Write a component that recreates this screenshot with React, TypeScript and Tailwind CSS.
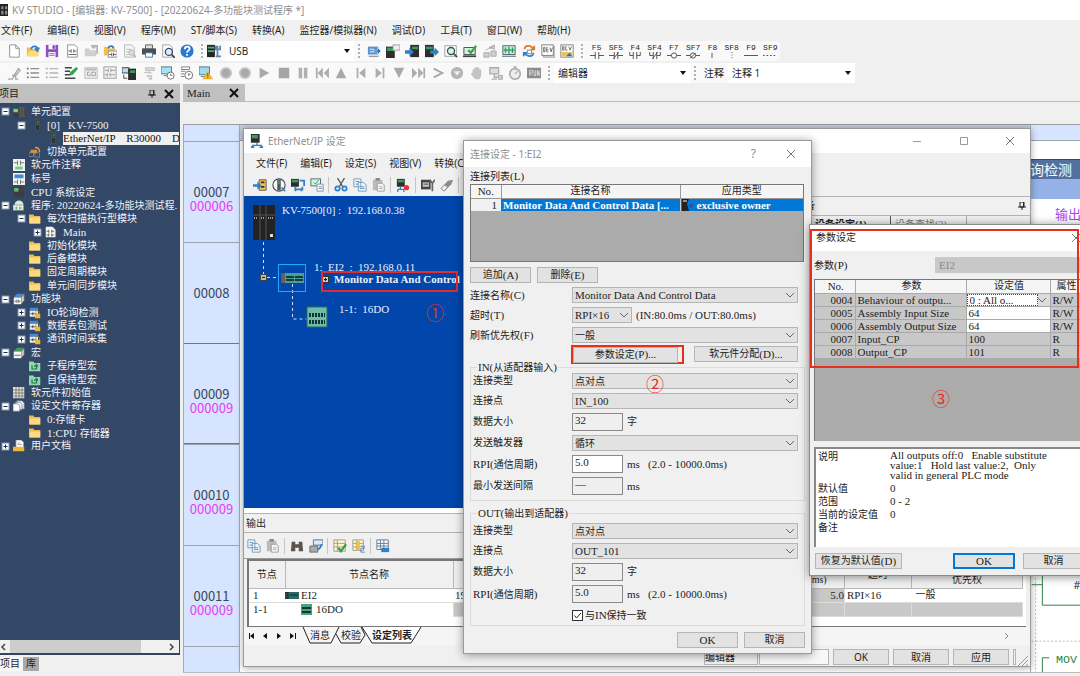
import React from "react";

const C = {
  k: "#3a3a3a",
  g: "#b4b4b4",
  b: "#2f80c8",
  gr: "#3c9a5f",
  y: "#f2c04e",
  p: "#8a4fc0",
};

const icons: Record<string, React.ReactNode> = {
  app: (<><rect width="16" height="16" fill="#222" /><path d="M2 3h3v4H2zM7 3h3v4H7zM12 3h3v4h-3zM2 9h3v5H2zM7 9h3v5H7zM12 9h3v5h-3z" fill="#8b8b8b" /></>),
  new: <path d="M3 1h7l4 4v10H3zM10 1v4h4" fill="#fff" stroke="#8c8c8c" />,
  open: (<><path d="M1 14V4h5l1 2h7v8z" fill={C.y} /><path d="M1 14l3-6h12l-3 6z" fill="#ffda7a" /><path d="M6 6c1-5 7-4 7 0M10 5l3 3 2-4" fill="none" stroke={C.b} strokeWidth="2" /></>),
  save: (<><path d="M1 1h14v14H1z" fill={C.p} /><path d="M4 1h8v5H4zM4 9h8v6H4z" fill="#fff" /><path d="M9 2h2v3H9zM5 11h6M5 13h6" fill={C.p} stroke={C.p} /></>),
  pageRung: (<><path d="M3 1h8l3 3v11H3z" fill="#fff" stroke="#888" /><path d="M4 8h3M10 8h3M7 6v4M10 6v4M4 12h9" stroke="#555" /></>),
  folderOff: (<><path d="M1 14V5h5l1 2h7v7z" fill="#cfcfcf" /><path d="M8 2h7v9M9 4h4" fill="none" stroke={C.g} strokeWidth="2" /></>),
  folderRung: (<><path d="M1 13V3h5l1 2h7v8z" fill={C.y} /><path d="M6 5c1-4 6-3 6 0" stroke={C.b} strokeWidth="2" fill="none" /><rect x="6" y="8" width="10" height="7" fill="#fff" stroke="#888" /><path d="M7 12h3M12 12h3M10 10v4M12 10v4" stroke="#555" /></>),
  pageOff: (<><path d="M3 1h8l3 3v11H3z" fill="#f5f5f5" stroke={C.g} /><path d="M5 6h6M5 9h4M5 12h3" stroke={C.g} /><circle cx="11" cy="10" r="3" fill="#ddd" stroke={C.g} /><path d="M13 12l3 3" stroke={C.g} strokeWidth="2" /></>),
  print: (<><path d="M4 1h8v5H4z" fill="#ddd" stroke="#555" /><rect y="5" width="16" height="7" fill="#4a4f57" /><path d="M4 10h8v5H4z" fill="#fff" stroke="#3b6ea5" /></>),
  preview: (<><path d="M2 1h8l3 3v11H2z" fill="#fff" stroke="#999" /><circle cx="9" cy="9" r="4" fill="#d8efff" stroke="#446" strokeWidth="1.5" /><path d="M12 12l4 4" stroke="#345" strokeWidth="2" /></>),
  help: (<><circle cx="8" cy="8" r="7.5" fill="#2a78d0" /><path d="M5.5 6c0-4 5.500-3.500 5.500-.5C11 7.500 8 7.500 8 10M8 11.500v2" stroke="#fff" strokeWidth="2" fill="none" /></>),
  plcTool: (<><rect y="1" width="9" height="14" fill="#262626" /><path d="M1 4h7M1 8h7" stroke="#4bb070" strokeWidth="2" /><path d="M12 2v12M10 2v4h5V2M10 14h6" stroke="#5f87ad" strokeWidth="2" fill="none" /></>),
  send: (<><path d="M1 3h12v9H1z" fill="#5a90c8" /><path d="M2 14h11" stroke="#666" /><path d="M3 6h5M3 9h5" stroke="#fff" /><path d="M8 7h4V4l4 4-4 4V9H8z" fill="#2272c8" stroke="#fff" strokeWidth=".5" /></>),
  plcTalk: (<><rect y="3" width="10" height="13" fill="#2d2d2d" /><rect x="1" y="4" width="8" height="4" fill={C.gr} /><path d="M8 1h8v6h-4l-2 2V7H8z" fill="#eee" stroke="#999" /></>),
  plcIn: (<><rect x="6" y="1" width="10" height="14" fill="#2d2d2d" /><rect x="8" y="3" width="7" height="3" fill={C.gr} /><path d="M0 7h5V4l5 5-5 5v-3H0z" fill={C.b} /></>),
  plcOut: (<><rect y="1" width="10" height="14" fill="#2d2d2d" /><rect x="1" y="3" width="8" height="3" fill={C.gr} /><path d="M6 7h5V4l5 5-5 5v-3H6z" fill={C.b} /></>),
  find: (<><rect x="1" y="2" width="13" height="12" fill="#fff" stroke="#999" /><circle cx="8" cy="8" r="4" fill="#d9f3e7" stroke="#355" strokeWidth="1.500" /><path d="M11 11l4 4" stroke="#355" strokeWidth="2" /></>),
  monCheck: (<><path d="M1 4h13v8H1z" fill="#d5f0df" stroke="#444" /><path d="M0 14h15" stroke="#444" strokeWidth="2" /><path d="M6 7l3 3 6-8" stroke="#39a83e" strokeWidth="2.500" fill="none" /></>),
  cutOff: <path d="M1 10h6v5H1zM7 4l6-3v5zM9 8h6v6H9zM3 7l9-4" fill="#cfcfcf" stroke="#a8a8a8" />,
  monGrid: (<><rect x="1" y="2" width="14" height="10" fill="#c9f0d8" stroke="#456" /><path d="M4 4v6M8 3v8M12 4v6M2 7h12" stroke="#2c9a58" strokeWidth="1.500" /><path d="M0 14h16" stroke="#456" /></>),
  loop: (<><path d="M3 6c0-5 8-5 10 0M10 6h4V2" stroke="#e07b21" strokeWidth="2" fill="none" /><path d="M13 10c0 5-8 5-10 0M6 10H2v4" stroke="#2f80c8" strokeWidth="2" fill="none" /><path d="M6 7h5v4H6z" fill="#fff" stroke="#777" /></>),
  dev: (<><rect x="3" y="3" width="13" height="12" fill="#ddd" stroke="#999" /><rect x="1" y="1" width="13" height="12" fill="#fff" stroke="#777" /><path d="M3 4v5h1.500V4zM7.500 4H6.500v5h2M6.500 6.500h2M10 4l1.500 5L13 4" fill="none" stroke="#555" strokeWidth=".9" /></>),
  devPic: (<><rect x="1" y="1" width="14" height="14" fill="#fff" stroke="#777" /><path d="M3 3v4h1.500V3zM7.500 3H6.500v4h2M10 3l1.500 4L13 3" fill="none" stroke="#555" strokeWidth=".9" /><path d="M2 9h12v5H2z" fill={C.y} /><path d="M7 14l4-4 3 4z" fill="#2376b9" /></>),
  pen: <path d="M1 15h5l2-4 5-8 2 2-6 7M9 12l-3-2M10 12v3h3" stroke="#a6a6a6" fill="none" strokeWidth="1.500" />,
  list: (<><path d="M5 3h10M5 8h10M5 13h10" stroke="#8e8e8e" strokeWidth="1.500" /><path d="M1 2h2v2H1zM1 7h2v2H1zM1 12h2v2H1z" fill="#777" /></>),
  listOff: (<><path d="M5 3h10M5 8h10M5 13h10" stroke="#b5b5b5" strokeWidth="1.500" /><path d="M1 2h2v2H1zM1 7h2v2H1zM1 12h2v2H1z" fill="#aaa" /></>),
  listPen: (<><path d="M1 2h8M1 6h6M1 10h6M1 14h12" stroke="#444" strokeWidth="1.500" /><path d="M6 11l1-4 7-6 2 2-6 7z" fill="#35a34a" /></>),
  winGo: (<><rect x="1" y="2" width="14" height="12" fill="#efefef" stroke={C.g} /><path d="M2 4h12" stroke={C.g} strokeWidth="2" /><path d="M7 7H4v4h3V9M9 7h4v4H9z" fill="none" stroke="#999" /></>),
  winRung: (<><rect x="1" y="1" width="14" height="13" fill="#efefef" stroke="#999" /><path d="M2 5h4M9 5h5M6 3v4M9 3v4M2 10h3M8 10h6M5 8v4M8 8v4" stroke="#999" /></>),
  plcMon: (<><rect x="0" y="2" width="8" height="6" fill="#bde" stroke="#333" /><rect x="7" y="3" width="9" height="13" fill="#2d2d2d" /><rect x="9" y="5" width="6" height="3" fill={C.gr} /><path d="M2 10v4h4" stroke="#333" fill="none" /></>),
  handOff: <path d="M4 2h10v3H4zM8 5v4M2 8c3-2 5 0 10 0M5 11h6v4H8" fill="#ddd" stroke="#b8b8b8" />,
  monClock: (<><rect x="0" y="1" width="12" height="8" fill="#a8e0f5" stroke="#4a7080" /><path d="M3 11h5" stroke="#4a7080" /><circle cx="11" cy="11" r="4" fill="#fff" stroke="#666" /><path d="M11 9v2h2" stroke="#666" fill="none" /></>),
  listClock: (<><path d="M2 1h9v3H2zM1 6h5M1 9h4M1 12h4" stroke="#777" fill="#fff" /><circle cx="10" cy="10.500" r="4.500" fill="#fff" stroke="#666" /><path d="M10 8v3l2-2" stroke="#666" fill="none" /></>),
  monWarn: (<><rect x="0" y="1" width="12" height="9" fill="#9bdcf5" stroke="#4a7080" /><path d="M2 12h5" stroke="#4a7080" /><path d="M10 5l6 10H4z" fill="#f4b32c" /><path d="M10 8v4M10 13v1" stroke="#553" /></>),
  rec: (<><circle cx="8" cy="8" r="7" fill="#c9c9c9" /><circle cx="8" cy="8" r="5" fill="#a9a9a9" /></>),
  play: <path d="M3 2l11 6-11 6z" fill="#a9a9a9" />,
  stop: <path d="M2 2h12v12H2z" fill="#a5a5a5" />,
  pause: <path d="M3 2h4v12H3zM9 2h4v12H9z" fill="#b0b0b0" />,
  rew: <path d="M1 2h2v12H1zM9 2v12L3 8zM16 2v12l-6-6z" fill="#adadad" />,
  up: <path d="M8 2l6 12H2z" fill="#a9a9a9" />,
  prev: <path d="M3 2h2v12H3zM13 2v12L6 8z" fill="#adadad" />,
  next: <path d="M11 2h2v12h-2zM3 2v12l7-6z" fill="#adadad" />,
  down: <path d="M8 14L2 2h12z" fill="#a9a9a9" />,
  ff: <path d="M13 2h2v12h-2zM7 2v12l6-6zM0 2v12l6-6z" fill="#adadad" />,
  gt: <path d="M3 3l10 5-10 5" stroke="#a5a5a5" strokeWidth="2" fill="none" />,
  dropC: (<><circle cx="8" cy="8" r="7" fill="#b5b5b5" /><path d="M4 6h8l-4 5z" fill="#eee" /></>),
  hand: <path d="M4 8V4h2V2h2V1h2v1h2v2h2v7l-2 4H7L2 9l1-1z" fill="#c4c4c4" />,
  netOff: <path d="M1 2h10v7H1zM6 9v4h6M10 11h5v4h-5M3 15h6" stroke="#adadad" strokeWidth="1.500" fill="#ddd" />,
  stopwatch: (<><circle cx="8" cy="9" r="6" fill="#eee" stroke="#adadad" strokeWidth="2" /><path d="M6 1h4M8 1v3M8 9l3-3" stroke="#adadad" strokeWidth="1.500" /></>),
  run: (<><rect y="2" width="16" height="12" fill="#8b8b8b" /><path d="M3 11V5h3v3H3l3 3M8 5v6h2V5M12 11V5l2 6V5" stroke="#ddd" fill="none" /></>),
  unitCfg: (<><rect x="0" y="3" width="7" height="6" fill="#7bd08f" stroke="#333" /><path d="M8 2h2v12H8zM11 2h2v12h-2zM14 2h2v12h-2z" fill="#413b34" stroke="#8c8060" strokeWidth=".5" /><path d="M1 10h6v4H1z" fill="#3b3b32" /></>),
  unit: (<><rect x="9" y="1" width="5" height="14" fill="#333" stroke="#5b6356" strokeWidth=".6" /><path d="M10 3h3M10 5h3M10 7h3" stroke="#45a85d" /></>),
  swap: (<><path d="M2 5h9v5H2z" fill="#d9902d" /><path d="M8 2c5 0 6 2 6 6" stroke="#e6a23a" strokeWidth="2" fill="none" /><path d="M0 9h6v5H0zM8 9h6v6H8z" fill="#34485c" stroke="#aac" strokeWidth=".7" /></>),
  cmt: (<><rect width="16" height="16" fill="#f2f2ee" /><path d="M1 5h5M10 5h5M6 2v6M10 2v6" stroke="#555" /><path d="M3 10h10v4H3z" fill="#73ce83" /></>),
  label: (<><rect width="16" height="16" fill="#f2f2ee" /><path d="M2 2h12v5H2z" fill="#3f8ad8" /><path d="M1 12h5M10 12h5M6 9v6M10 9v6" stroke="#555" /></>),
  cpu: (<><rect x="1" y="2" width="7" height="6" fill="#67b677" stroke="#333" /><path d="M9 1h5v14H9zM2 9h6v5H2z" fill="#3f3b36" /><path d="M10 5h3" stroke="#d33" /></>),
  prog: (<><path d="M2 8c0-8 12-8 12 0z" fill="#dfe8e0" /><path d="M0 8h14v7H0z" fill="#f4f4ee" stroke="#7c9a7c" /><path d="M2 12h3M9 12h3M5 10v4M9 10v4" stroke="#485" /></>),
  folder: (<><path d="M0 14V2h6l1 2h8v10z" fill="#eeb94f" /><path d="M1 6h14v8H1z" fill="#ffda80" /></>),
  main: (<><path d="M1 1h9l4 4v10H1z" fill="#f5f5f0" /><path d="M2 7h3M9 7h3M5 5v4M9 5v4M2 12h3M9 12h3M5 10v4M9 10v4" stroke="#444" /></>),
  fb: (<><path d="M1 6l4-5h10l-4 5z" fill="#4d88c8" /><path d="M11 6l4-5v9l-4 5z" fill="#ccc" stroke="#555" strokeWidth=".7" /><path d="M1 6h10v9H1z" fill="#f4f4f4" /><path d="M2 11h2M7 11h3M5 9v4M7 9v4" stroke="#444" /></>),
  lock: (<><path d="M1 1h11v4H1z" fill="#4b86cf" /><path d="M1 5h11v8H1z" fill="#eee" /><path d="M2 9h8M5 7v4" stroke="#333" /><path d="M9 9V7c0-3 5-3 5 0v2" stroke="#b48a20" fill="none" /><rect x="8" y="9" width="7" height="6" fill="#f0b72e" /></>),
  macro: (<><path d="M1 6l4-5h10l-4 5z" fill="#3f9b5f" /><path d="M11 6l4-5v9l-4 5z" fill="#ccc" stroke="#555" strokeWidth=".7" /><path d="M1 6h10v9H1z" fill="#f4f4f4" /><path d="M2 11h8" stroke="#444" /></>),
  sub: (<><path d="M0 2h6l1 2h8v11H0z" fill="#8fd8b0" /><path d="M4 7v5h6V6M7 9l3-3 2 3" stroke="#24754a" fill="none" strokeWidth="1.500" /></>),
  grid: (<><rect width="15" height="15" fill="#e6e2da" /><path d="M0 4h15M0 8h15M0 12h15M4 0v15M8 0v15M12 0v15" stroke="#6b6560" /></>),
  files: (<><path d="M5 1h7l3 3v8H5z" fill="#e8eef8" stroke="#66788c" /><path d="M3 3h6l3 3v7H3z" fill="#f4f7fb" stroke="#66788c" /><path d="M0 5h6l3 3v7H0z" fill="#fff" stroke="#66788c" /></>),
  docs: (<><path d="M4 0h7l3 3v9H4z" fill="#fff" stroke="#999" /><path d="M0 9h15v6H0z" fill="#f0b83a" /><path d="M6 4h4M6 6h6" stroke="#999" /></>),
  ethIn: (<><path d="M7 2h8v12H7z" fill={C.y} stroke="#555" /><path d="M9 5h4M9 10h4" stroke="#333" strokeWidth="2" /><path d="M0 7h5V4l5 5-5 4v-3H0z" fill={C.b} /></>),
  info: (<><circle cx="8" cy="8" r="7" fill="#f5f7fa" stroke="#345" strokeWidth="1.200" /><path d="M6 2h4v12H6z" fill="#555" /><path d="M7 3h2v4H7z" fill={C.gr} /><path d="M11 11l4 4" stroke="#3c79b8" strokeWidth="2" /></>),
  plcNet: (<><rect y="1" width="9" height="9" fill="#2d2d2d" /><rect x="1" y="2" width="7" height="3" fill={C.gr} /><path d="M10 3h5v6M5 10v3h8v-3M5 12v3M12 12v3" stroke={C.b} strokeWidth="2" fill="none" /></>),
  plcLogo: (<><rect x="1" width="10" height="10" fill="#2d2d2d" /><rect x="2" y="1" width="7" height="4" fill={C.gr} /><path d="M8 10v3M3 16v-3h10v3" stroke={C.b} strokeWidth="1.500" fill="none" /><path d="M1 14h4v2H1zM11 14h4v2h-4z" fill={C.b} /></>),
  monDoc: (<><rect x="1" y="1" width="11" height="8" fill="#d6f4e2" stroke="#466" /><path d="M4 5l2 2 4-5" stroke="#2f9c50" fill="none" /><path d="M8 7h7v8H8z" fill="#fff" stroke="#78a" /><path d="M10 10h4M10 12h4" stroke="#78a" /></>),
  scissors: (<><path d="M4 0l6 10M12 0L6 10" stroke="#555" strokeWidth="1.500" /><circle cx="4" cy="12" r="2.500" fill="none" stroke={C.b} strokeWidth="2" /><circle cx="12" cy="12" r="2.500" fill="none" stroke={C.b} strokeWidth="2" /></>),
  copy: (<><path d="M1 1h8v9H1zM6 5h6l3 3v7H6z" fill="#eef6ff" stroke="#7391ad" /><path d="M3 4h4M3 7h3M8 10h5M8 12h5" stroke="#4d8bd0" /></>),
  paste: (<><path d="M1 2h11v12H1z" fill="#bbb" /><path d="M4 0h5v3H4z" fill="#888" /><path d="M6 6h6l2 2v7H6z" fill="#f4f4f4" stroke="#999" /><path d="M8 10h4M8 12h4" stroke="#aaa" /></>),
  plcRec: (<><rect x="1" y="1" width="9" height="9" fill="#2d2d2d" /><rect x="2" y="2" width="7" height="3" fill={C.gr} /><path d="M5 10v3M2 13h7M2 13v3M9 13v3" stroke={C.b} strokeWidth="1.500" /><circle cx="12" cy="11" r="3" fill="#e23b2e" /></>),
  setTool: (<><rect x="0" y="2" width="11" height="11" fill="#444" /><path d="M2 5h7v5H2z" fill="#ccc" /><path d="M3 7h5" stroke="#333" /><path d="M13 6v9M10 2l3 4 3-4" stroke="#666" strokeWidth="2" fill="none" /></>),
  eraser: (<><path d="M1 12l8-9 6-1-2 5-8 8z" fill="#8c8c8c" /><path d="M1 12l4-4 4 2-4 5z" fill="#eee" stroke="#888" /></>),
  bino: (<path d="M2 3h4v3h4V3h4l1 11h-5v-4H6v4H1z" fill="#59544c" />),
  jump: (<><path d="M5 1h11v6H5z" fill="#dce9f7" stroke="#567" /><path d="M1 8h9v7H1z" fill="#aaa" stroke="#666" /><path d="M14 6c0 4-2 5-4 6" stroke={C.b} strokeWidth="2" fill="none" /></>),
  sheetChk: (<><path d="M1 1h13v13H1z" fill="#fff5cf" stroke="#998" /><path d="M1 5h13M1 9h13M5 1v13" stroke="#998" /><path d="M6 10l3 4 6-8" stroke="#32a049" strokeWidth="2.500" fill="none" /></>),
  sheet123: (<><path d="M1 1h12v12H1z" fill="#fff5cf" stroke="#998" /><path d="M1 5h12M1 9h12M5 1v12" stroke="#998" /><path d="M5 2h4v11H5z" fill={C.y} /><path d="M10 8h4v3h-4v4h5" stroke="#4c88c0" fill="none" /></>),
  sheetNet: (<><path d="M1 1h13v11H1z" fill="#fff" stroke="#57718c" /><path d="M1 5h13M1 8h13M5 1v11M9 1v11" stroke="#57718c" /><path d="M6 10h9v5H6z" fill="#3180cf" /></>),
};

function Icon({ name, small }: { name: string; small?: boolean }) {
  return (
    <svg viewBox="0 0 16 16" className={small ? "h-3 w-3 shrink-0" : "h-3.5 w-3.5 shrink-0"} aria-hidden="true">
      {icons[name]}
    </svg>
  );
}

function IconRow({ names, className }: { names: string[]; className: string }) {
  return (
    <div className={"flex items-center " + className}>
      {names.map((n, i) => (
        <button key={i} aria-label={n} className="flex flex-1 items-center justify-center">
          <Icon name={n} />
        </button>
      ))}
    </div>
  );
}

const Grip = () => <span className="mx-1 h-3.5 w-0 shrink-0 border-l-2 border-dotted border-[#b0b0b0]" />;
const Sep = () => <span className="mx-0.5 h-4 w-px shrink-0 bg-[#c4c4c4]" />;

/* Latin runs use a slightly larger serif so that they sit level with the 10px ideographs. */
function T({ children }: { children: string }) {
  return (
    <>
      {children.split(/([\x20-\x7e]+)/).map((s, i) =>
        i % 2 ? (
          <span key={i} className="whitespace-pre text-[11px]">{s}</span>
        ) : (
          s
        ),
      )}
    </>
  );
}

const serif = "font-[family-name:'Liberation_Serif','Noto_Sans_CJK_SC',serif]";

function Chevron() {
  return (
    <svg viewBox="0 0 8 6" className="pointer-events-none absolute right-1 top-1/2 h-1.5 w-2 -translate-y-1/2" aria-hidden="true">
      <path d="M0 1l4 4 4-4" fill="none" stroke="#666" />
    </svg>
  );
}

function Select({ id, value, width, cjk }: { id: string; value: string; width: string; cjk?: boolean }) {
  return (
    <span className={"relative block " + width}>
      <select
        id={id}
        defaultValue={value}
        className={"block h-4 w-full appearance-none border border-[#b5b5b5] bg-[#e2e2e2] pl-0.5 pr-4 leading-[13px] text-[#222] " + (cjk ? "text-[10px]" : "text-[11px]")}
      >
        <option>{value}</option>
      </select>
      <Chevron />
    </span>
  );
}

function FormRow({ id, label, tall, children, inner }: { id: string; label: string; tall?: boolean; inner?: boolean; children: React.ReactNode }) {
  return (
    <div className={"grid items-center " + (tall ? "h-[22px] " : "h-5 ") + (inner ? "grid-cols-[99px_1fr]" : "grid-cols-[102px_1fr]")}>
      <label htmlFor={id} className="whitespace-nowrap"><T>{label}</T></label>
      <div className="flex items-center whitespace-nowrap">{children}</div>
    </div>
  );
}

function NumInput({ id, value, white }: { id: string; value: string; white?: boolean }) {
  return (
    <input
      id={id}
      defaultValue={value}
      className={"mr-1 h-[18px] w-[51px] border border-[#8a8a8a] pb-1 pl-0.5 text-[11px] leading-3 " + (white ? "bg-white" : "bg-[#efefef]")}
    />
  );
}

function Btn({ children, className }: { children: string; className: string }) {
  return (
    <button className={"flex h-4 items-center justify-center whitespace-nowrap bg-[#e2e2e2] leading-none " + className}>
      <T>{children}</T>
    </button>
  );
}

type Node = { level: number; icon: string; text: string; box?: "+" | "-"; selected?: boolean };
const tree: Node[] = [
  { level: 0, icon: "unitCfg", text: "单元配置", box: "-" },
  { level: 1, icon: "unit", text: "[0]   KV-7500", box: "-" },
  { level: 2, icon: "unit", text: "EtherNet/IP    R30000    D", selected: true },
  { level: 1, icon: "swap", text: "切换单元配置" },
  { level: 0, icon: "cmt", text: "软元件注释" },
  { level: 0, icon: "label", text: "标号" },
  { level: 0, icon: "cpu", text: "CPU 系统设定" },
  { level: 0, icon: "prog", text: "程序: 20220624-多功能块测试程.", box: "-" },
  { level: 1, icon: "folder", text: "每次扫描执行型模块", box: "-" },
  { level: 2, icon: "main", text: "Main", box: "+" },
  { level: 1, icon: "folder", text: "初始化模块" },
  { level: 1, icon: "folder", text: "后备模块" },
  { level: 1, icon: "folder", text: "固定周期模块" },
  { level: 1, icon: "folder", text: "单元间同步模块" },
  { level: 0, icon: "fb", text: "功能块", box: "-" },
  { level: 1, icon: "lock", text: "IO轮询检测", box: "+" },
  { level: 1, icon: "lock", text: "数据丢包测试", box: "+" },
  { level: 1, icon: "lock", text: "通讯时间采集", box: "+" },
  { level: 0, icon: "macro", text: "宏", box: "-" },
  { level: 1, icon: "sub", text: "子程序型宏" },
  { level: 1, icon: "sub", text: "自保持型宏" },
  { level: 0, icon: "grid", text: "软元件初始值" },
  { level: 0, icon: "files", text: "设定文件寄存器", box: "-" },
  { level: 1, icon: "folder", text: "0:存储卡" },
  { level: 1, icon: "folder", text: "1:CPU 存储器" },
  { level: 0, icon: "docs", text: "用户文档", box: "+" },
];
const indents = ["pl-0", "pl-4", "pl-8"];

function Expander({ kind }: { kind?: "+" | "-" }) {
  return (
    <svg viewBox="0 0 11 11" className="h-[11px] w-[11px] shrink-0" aria-hidden="true">
      {kind && (
        <>
          <rect x="2" y="2" width="7" height="7" fill="#fff" stroke="#8795ab" />
          <path d={kind === "+" ? "M3.500 5.500h4M5.500 3.500v4" : "M3.500 5.500h4"} stroke="#1d2f4c" />
        </>
      )}
    </svg>
  );
}

const Pin = () => (
  <svg viewBox="0 0 8 8" className="h-2 w-2" aria-hidden="true">
    <path d="M2 0h4v5H2zM0 5h8M4 5v3" fill="none" stroke="#222" />
    <path d="M5 0h1v5H5z" fill="#222" />
  </svg>
);
const Cross = ({ thin }: { thin?: boolean }) => (
  <svg viewBox="0 0 10 10" className="h-2.5 w-2.5" aria-hidden="true">
    <path d="M1 1l8 8M9 1l-8 8" stroke={thin ? "#777" : "#111"} strokeWidth={thin ? 1 : 2} />
  </svg>
);

function ProjectPanel() {
  return (
    <aside className={"flex w-[180px] shrink-0 flex-col " + serif}>
      <header className="flex h-[19px] items-center bg-[#c0c0c0]">
        <span className="-ml-px flex-1">项目</span>
        <button aria-label="pin" className="mr-2"><Pin /></button>
        <button aria-label="close panel" className="mr-1.5"><Cross /></button>
      </header>
      <div className="flex min-h-0 flex-1 flex-col border-b-2 border-r border-[#33455f] bg-[#334766] text-[#f1f3f6]">
        <ul className="flex h-[350px] shrink-0 flex-col overflow-hidden pt-0.5">
          {tree.map((n) => (
            <li key={n.text} className={"flex min-h-0 flex-1 items-center gap-0.5 " + indents[n.level]}>
              <Expander kind={n.box} />
              <Icon name={n.icon} small />
              <span className={"ml-1 whitespace-nowrap leading-3 " + (n.selected ? "flex-1 bg-[#f0f0f0] text-[#111]" : "")}>
                <T>{n.text}</T>
              </span>
            </li>
          ))}
        </ul>
        <div className="flex-1" />
        <div className="flex h-[13px] items-center bg-[#f0f0f0] text-[#444]">
          <span className="w-2.5"><svg viewBox="0 0 6 8" className="h-2 w-1.5"><path d="M5 1L2 4l3 3" fill="none" stroke="#444" strokeWidth="1.500" /></svg></span>
          <span className="h-full w-[131px] bg-[#cdcdcd]" />
          <span className="ml-auto mr-1"><svg viewBox="0 0 6 8" className="h-2 w-1.5"><path d="M1 1l3 3-3 3" fill="none" stroke="#444" strokeWidth="1.500" /></svg></span>
        </div>
      </div>
      <div className="flex h-[21px] items-start pt-0.5 leading-[14px]">
        <button className="h-3.5 w-[23px] bg-[#f7f7f7] text-left">项目</button>
        <button className="h-3.5 w-4 bg-[#a8a8a8]">库</button>
      </div>
    </aside>
  );
}

const ladder: [string, string][] = [
  ["00007", "000006"],
  ["00008", ""],
  ["00009", "000009"],
  ["00010", "000009"],
  ["00011", "000009"],
];

function Editor() {
  return (
    <main className="flex min-w-0 flex-1 flex-col pl-[3px]">
      <div className="flex h-[18px] border-b border-[#bcbcbc]">
        <button className={"flex w-[62px] items-center justify-between bg-[#c0c0c0] pl-1 pr-1.5 text-[11px] " + serif}>
          Main <Cross />
        </button>
      </div>
      <div className="h-[22px]" />
      <div className="relative flex min-h-0 flex-1 border-t border-[#9c9c9c] bg-white">
        <div className="flex w-[57px] shrink-0 flex-col border-x border-[#a2aab6] bg-[#d6e4ff] text-center font-[family-name:'Noto_Sans_CJK_SC',sans-serif] text-[13px] leading-[14px] text-[#3a4656]">
          <div className="h-4" />
          {ladder.map(([n, step], i) => (
            <div key={n} className={"h-[101px] border-t pt-[43px] " + (i === 2 ? "border-[#6f7782] border-b" : "border-[#9aa3ae]")}>
              <div>{n}</div>
              <div className="text-[#e83cf0]">{step}</div>
            </div>
          ))}
          <div className="flex-1 border-t border-[#9aa3ae]" />
        </div>
        <div className="flex min-w-0 flex-1 flex-col">
          <div className="h-4 border-b border-[#9aa3ae] bg-[#c3ccda]" />
        </div>
        <div className="flex w-[50px] shrink-0 flex-col overflow-hidden border-l border-[#a2aab6]">
          <div className="h-4 border-b border-[#9aa3ae] bg-[#d6e4ff]" />
          <div className="h-[19px]" />
          <div className="flex h-5 shrink-0 justify-end whitespace-nowrap border-t border-[#1d5c38] bg-[#53709f] pr-2 text-[14px] leading-5 text-white">询检测</div>
          <div className="h-5 bg-[#94b2e8]" />
          <div className="h-[30px] whitespace-nowrap pl-6 text-[13px] leading-[30px] text-[#a445ef]">输出</div>
          <svg viewBox="0 0 50 101" className="mt-[345px] h-[101px] w-[50px]" aria-hidden="true">
            <path d="M0 11h11M11 0v32h40M11 101v-15h7" fill="none" stroke="#2b8140" />
            <path d="M4 0v101M0 69h50" fill="none" stroke="#bbb" strokeDasharray="2 2" />
            <text x="43" y="15" fontSize="11" fill="#333">#</text>
            <text x="25" y="91" fontSize="12" fill="#2b8140" fontFamily="Liberation Mono">MOV</text>
          </svg>
        </div>
      </div>
      <div className="h-1 border-t border-[#bbb]" />
    </main>
  );
}

const Caret = () => (
  <svg viewBox="0 0 6 4" className="h-1 w-1.5" aria-hidden="true"><path d="M0 0h6L3 4z" fill="#111" /></svg>
);

function Combo({ value, className }: { value: string; className: string }) {
  return (
    <span className={"relative block h-5 bg-white " + className}>
      <select aria-label={value} defaultValue={value} className="h-full w-full appearance-none pl-1">
        <option>{value}</option>
      </select>
      <span className="pointer-events-none absolute right-1 top-2"><Caret /></span>
    </span>
  );
}

const fkeys: [string, string][] = [
  ["F5", "M0 4h6M10 4h6M6 0v8M10 0v8"],
  ["SF5", "M0 4h6M10 4h6M6 0v8M10 0v8M5 8l6-8"],
  ["F4", "M2 0v4h4M14 0v4h-4M6 0v8M10 0v8"],
  ["SF4", "M2 0v4h4M14 0v4h-4M6 0v8M10 0v8M5 8l6-8"],
  ["F7", "M0 4h5M11 4h5M5 4a3 3 0 1 0 6 0a3 3 0 1 0-6 0"],
  ["SF7", "M0 4h5M11 4h5M5 4a3 3 0 1 0 6 0a3 3 0 1 0-6 0M5 7l6-6"],
  ["F8", "M8 1v6"],
  ["SF8", "M8 0v1M8 3v1M8 6v1"],
  ["F9", "M0 4h16"],
  ["SF9", "M0 4h2M4 4h2M8 4h2M12 4h2"],
];

function EthernetWindow() {
  const th = "border-r border-b border-[#b8b8b8] bg-[#f0f0f0] p-0 font-normal";
  const gray = "border border-[#dcdcdc] bg-[#c8c8c8] p-0";
  return (
    <section className="absolute left-[243px] top-[128px] flex h-[539px] w-[788px] flex-col border border-[#9a9a9a] bg-[#f0f0f0] shadow-[0_1px_7px_rgba(0,0,0,0.35)]">
      <header className="flex h-6 items-center bg-white pl-1.5 text-[#8f8f8f]">
        <Icon name="plcLogo" />
        <h2 className="ml-1 flex-1">EtherNet/IP 设定</h2>
        <div className="flex w-[118px] justify-between pr-[15px]">
          <button aria-label="minimize"><svg viewBox="0 0 10 10" className="h-2.5 w-2.5"><path d="M1 5.500h8" stroke="#999" /></svg></button>
          <button aria-label="maximize"><svg viewBox="0 0 10 10" className="h-2.5 w-2.5"><path d="M1.500 1.500h7v7h-7z" fill="none" stroke="#999" /></svg></button>
          <button aria-label="close"><Cross thin /></button>
        </div>
      </header>
      <nav className="flex h-5 items-center gap-[13px] pl-3">
        {["文件(F)", "编辑(E)", "设定(S)", "视图(V)", "转换(C)"].map((m) => (
          <button key={m} className="whitespace-nowrap">{m}</button>
        ))}
      </nav>
      <div className="flex h-[23px] items-center pl-1.5">
        <IconRow names={["ethIn", "info", "plcNet", "monDoc"]} className="w-[76px]" />
        <Sep />
        <IconRow names={["scissors", "copy", "paste"]} className="w-[57px]" />
        <Sep />
        <IconRow names={["plcRec"]} className="w-5" />
        <Sep />
        <IconRow names={["setTool", "eraser"]} className="w-[38px]" />
        <Sep />
      </div>
      <div className="flex h-[312px] shrink-0">
        <div className={"relative flex-1 overflow-hidden bg-[#0046ab] text-[11px] text-[#e8f0ff] " + serif}>
          <svg viewBox="0 0 220 312" className="absolute left-0 top-0 h-[312px] w-[220px]" aria-hidden="true">
            <path d="M19.500 46v32M23 81.500h12M48.500 88v35h14" fill="none" stroke="#cfe0ff" strokeDasharray="3 3" />
            <rect x="9" y="9" width="22" height="35" fill="#222" />
            <path d="M16 9v35M22 9v35M9 19h22" stroke="#555" />
            <path d="M10 22h4M17 22h4M24 22h6" stroke="#999" strokeWidth="2" strokeDasharray="1 1" />
            <path d="M26 38h3v3h-3z" fill="#ddd" />
            <rect x="16.500" y="78.500" width="6" height="6" fill="#bbb" stroke="#444" />
            <path d="M18 81.500h3" stroke="#222" />
            <rect x="34.500" y="68.500" width="27" height="27" fill="none" stroke="#19a9ff" />
            <rect x="37" y="77" width="23" height="10" fill="#4f9c96" />
            <path d="M37 77h4v10h-4z" fill="#6b5a55" />
            <path d="M42 81h8M51 81h8M42 84h8M51 84h8" stroke="#143c3c" strokeWidth="2" />
            <rect x="63" y="111" width="20" height="20" fill="#6dbda8" stroke="#2a6b60" />
            <path d="M65 119h16M65 126h16" stroke="#12332e" strokeWidth="4" strokeDasharray="2 1" />
            <rect x="78.500" y="80.500" width="6" height="6" fill="#ccc" stroke="#333" />
            <path d="M80 83.500h3M81.500 82v3" stroke="#111" />
          </svg>
          <span className="absolute left-[38px] top-2 whitespace-pre">KV-7500[0] :  192.168.0.38</span>
          <span className="absolute left-[70px] top-[65px] whitespace-pre">1:  EI2  :  192.168.0.11</span>
          <span className="absolute left-[90px] top-[77px] whitespace-pre font-bold">Monitor Data And Control Data</span>
          <span className="absolute left-[95px] top-[107px] whitespace-pre">1-1:  16DO</span>
          <span className="absolute left-[77px] top-[75px] h-[21px] w-[137px] border-2 border-[#e52b2b]" />
        </div>
        <div className={"flex w-[226px] flex-col border-l border-t border-[#b5b5b5] " + serif}>
          <div className="flex h-[19px] items-center justify-between border-b border-[#b5b5b5] pr-1">
            <span>备</span>
            <button aria-label="pin panel"><Pin /></button>
          </div>
          <div className="flex pl-2.5 leading-[18px]">
            <button className="w-[76px] border-r border-[#555] text-left font-bold">设备设定(1)</button>
            <button className="w-[76px] border-r border-[#aaa] pl-1 text-left text-[#777]">设备查找(2)</button>
          </div>
        </div>
      </div>
      <div className="h-[5px] bg-white" />
      <div className="flex h-5 items-center border-y border-[#b5b5b5] pl-0.5">输出</div>
      <div className="flex h-[26px] shrink-0 items-center border-b border-[#9a9a9a]">
        <IconRow names={["copy", "paste"]} className="w-[38px]" />
        <Sep />
        <IconRow names={["bino", "jump"]} className="w-[38px]" />
        <Sep />
        <IconRow names={["sheetChk", "sheet123"]} className="w-[38px]" />
        <Sep />
        <IconRow names={["sheetNet"]} className="w-5" />
      </div>
      <div className={"ml-[3px] mr-1 h-[68px] shrink-0 overflow-hidden border-b border-l-2 border-t-2 border-[#777] bg-white " + serif}>
        <table className="w-[774px] table-fixed border-collapse text-left">
          <colgroup>
            <col className="w-[36px]" /><col className="w-[168px]" /><col className="w-[200px]" /><col /><col className="w-[54px]" /><col className="w-[67px]" /><col className="w-[111px]" />
          </colgroup>
          <thead>
            <tr className="h-[27px] text-center leading-[11px]">
              <th className={th}>节点</th>
              <th className={th}>节点名称</th>
              <th className={th}>IP地址</th>
              <th className={th}>连接名称</th>
              <th className={th}>RPI<br />(ms)</th>
              <th className={th}>超时</th>
              <th className={th}>刷新<br />优先权</th>
            </tr>
          </thead>
          <tbody className="text-[11px] leading-3">
            <tr className="h-3.5 border-b border-[#ddd]">
              <td className="p-0 pl-1">1</td>
              <td className="p-0">
                <span className="flex items-center gap-0.5">
                  <svg viewBox="0 0 14 7" className="h-[7px] w-3.5"><path d="M0 0h14v7H0z" fill="#2c6a68" /><path d="M0 0h3v7H0M5 3h8" stroke="#10282f" fill="#345" /></svg>EI2
                </span>
              </td>
              <td className="p-0 pl-0.5">192.168.0.11</td>
              <td className={gray} />
              <td className={gray + " text-right"}>5.0</td>
              <td className="p-0 pl-0.5">RPI×16</td>
              <td className="p-0 pl-1 text-[10px]">一般</td>
            </tr>
            <tr className="h-3.5">
              <td className="p-0 pl-1">1-1</td>
              <td className="p-0">
                <span className="flex items-center gap-1 pl-4">
                  <svg viewBox="0 0 11 11" className="h-[11px] w-[11px]"><path d="M0 0h11v11H0z" fill="#4aa37f" /><path d="M1 4h9M1 8h9" stroke="#0f3b2c" strokeWidth="2" /></svg>16DO
                </span>
              </td>
              <td className={gray} /><td className={gray} /><td className={gray} /><td className={gray} /><td className={gray} />
            </tr>
          </tbody>
        </table>
      </div>
      <div className={"flex h-[18px] shrink-0 items-center bg-[#f5f5f5] pl-1 " + serif}>
        <svg viewBox="0 0 50 8" className="h-2 w-[50px] shrink-0" aria-hidden="true">
          <path d="M1 1h1v6H1zM6 1v6L2 4zM19 1v6l-4-3zM29 1v6l4-3zM42 1v6l4-3zM47 1h1v6h-1z" fill="#111" />
        </svg>
        <div className="relative flex h-full items-center">
          <svg viewBox="0 0 124 18" className="absolute left-0 top-0 h-[18px] w-[124px]" aria-hidden="true">
            <path d="M5 0l7 16h21l8-16M38 7l5 9h19l5-8-4-8" fill="none" stroke="#222" />
            <path d="M64 0l10 16h39l10-16" fill="#fff" stroke="#222" />
          </svg>
          <button className="relative ml-3 w-[31px] text-left">消息</button>
          <button className="relative w-[31px] text-left">校验</button>
          <button className="relative w-[46px] whitespace-nowrap text-left font-bold">设定列表</button>
        </div>
        <svg viewBox="0 0 6 8" className="ml-auto mr-5 h-2 w-1.5"><path d="M1 1l3 3-3 3" fill="none" stroke="#888" /></svg>
      </div>
      <footer className="flex min-h-0 flex-1 items-end justify-end pr-0.5">
        <div className="flex h-[18px] items-center gap-1">
          <span className="-mr-1 h-4 w-[54px] border border-[#b5b5b5] leading-[14px]">编辑器</span>
          <span className="ml-px h-4 w-[70px] border border-[#b5b5b5] bg-[#f7f7f7]" />
          <button className="h-4 w-14 border border-[#b5b5b5] bg-[#e2e2e2] leading-3">OK</button>
          <button className="h-4 w-14 border border-[#b5b5b5] bg-[#e2e2e2] leading-3">取消</button>
          <button className="h-4 w-14 border border-[#b5b5b5] bg-[#e2e2e2] leading-3">应用</button>
          <span className="h-4 w-[3px] border border-[#b5b5b5]" />
        </div>
        <svg viewBox="0 0 10 10" className="ml-0.5 h-2.5 w-2.5" aria-hidden="true"><path d="M0 10L10 0M4 10l6-6M8 10l2-2" stroke="#999" /></svg>
      </footer>
    </section>
  );
}

function ConnectionDialog() {
  const b = "border border-[#b5b5b5]";
  return (
    <section className="absolute left-[463px] top-[140px] w-[349px] border border-[#9a9a9a] bg-[#f0f0f0] pb-[5px] shadow-[0_1px_9px_rgba(0,0,0,0.4)]">
      <header className="flex h-[26px] items-center bg-white pl-1.5 pr-[15px] text-[#8f8f8f]">
        <h2 className="flex-1">连接设定 - 1:EI2</h2>
        <button aria-label="help" className="mr-[30px] text-xs">?</button>
        <button aria-label="close"><Cross thin /></button>
      </header>
      <div className={"px-1.5 text-[#222] " + serif}>
        <div className="h-[17px] leading-[18px]"><T>连接列表(L)</T></div>
        <div className="h-[78px] w-[334px] border border-[#777] bg-[#ababab]">
          <table className="w-full table-fixed border-collapse leading-3">
            <colgroup><col className="w-[30px]" /><col className="w-[179px]" /><col /></colgroup>
            <thead>
              <tr className="h-[13px] bg-[#f5f5f5]">
                <th className="border-b border-r border-[#999] p-0 text-[11px] font-normal">No.</th>
                <th className="border-b border-r border-[#999] p-0 font-normal">连接名称</th>
                <th className="border-b border-[#999] p-0 font-normal">应用类型</th>
              </tr>
            </thead>
            <tbody>
              <tr className="h-[13px] bg-[#0078d7] text-[11px] font-bold text-white">
                <td className="bg-[#f0f0f0] p-0 pr-1 text-right font-normal text-[#222]">1</td>
                <td className="overflow-hidden whitespace-nowrap border-r border-[#ccc] p-0 pl-0.5">Monitor Data And Control Data [...</td>
                <td className="p-0">
                  <span className="flex items-center gap-1">
                    <svg viewBox="0 0 12 12" className="h-3 w-3"><path d="M1 0h7l-2 5 2 7H1z" fill="#222" /><path d="M2 2h4" stroke="#fff" /><path d="M8 7h4" stroke="#2b50a0" strokeWidth="3" /></svg>
                    exclusive owner
                  </span>
                </td>
              </tr>
            </tbody>
          </table>
        </div>
        <div className="mb-0.5 mt-[5px] flex gap-1.5">
          <Btn className={"w-[61px] " + b}>追加(A)</Btn>
          <Btn className={"w-[61px] " + b}>删除(E)</Btn>
        </div>
        <FormRow id="name" label="连接名称(C)"><Select id="name" value="Monitor Data And Control Data" width="w-[226px]" /></FormRow>
        <FormRow id="timeout" label="超时(T)">
          <Select id="timeout" value="RPI×16" width="w-[60px]" />
          <span className="ml-1 text-[11px]">(IN:80.0ms / OUT:80.0ms)</span>
        </FormRow>
        <FormRow id="prio" label="刷新优先权(F)"><Select id="prio" value="一般" width="w-[226px]" cjk /></FormRow>
        <div className="flex h-[18px] items-center pl-[101px]">
          <div className="h-[19px] w-[113px] shrink-0 border-2 border-[#e5301f]">
            <Btn className={"w-[105px] " + b}>参数设定(P)...</Btn>
          </div>
          <Btn className={"ml-2.5 w-[104px] " + b}>软元件分配(D)...</Btn>
        </div>
        <fieldset className="border border-[#dcdcdc] px-0.5 pb-[3px]">
          <legend className="ml-1 h-2 px-px leading-[8px]"><T>IN(从适配器输入)</T></legend>
          <FormRow inner id="inType" label="连接类型"><Select id="inType" value="点对点" width="w-[226px]" cjk /></FormRow>
          <FormRow inner id="inPoint" label="连接点"><Select id="inPoint" value="IN_100" width="w-[226px]" /></FormRow>
          <FormRow inner tall id="inSize" label="数据大小"><NumInput id="inSize" value="32" />字</FormRow>
          <FormRow inner id="inTrig" label="发送触发器"><Select id="inTrig" value="循环" width="w-[226px]" cjk /></FormRow>
          <FormRow inner tall id="inRpi" label="RPI(通信周期)"><NumInput id="inRpi" value="5.0" white /><T>ms   (2.0 - 10000.0ms)</T></FormRow>
          <FormRow inner tall id="inMin" label="最小发送间隔"><NumInput id="inMin" value="—" /><T>ms</T></FormRow>
        </fieldset>
        <fieldset className="mt-2 border border-[#dcdcdc] px-0.5">
          <legend className="ml-1 h-2 px-px leading-[8px]"><T>OUT(输出到适配器)</T></legend>
          <div className="pt-1">
            <FormRow inner id="outType" label="连接类型"><Select id="outType" value="点对点" width="w-[226px]" cjk /></FormRow>
            <FormRow inner id="outPoint" label="连接点"><Select id="outPoint" value="OUT_101" width="w-[226px]" /></FormRow>
            <FormRow inner tall id="outSize" label="数据大小"><NumInput id="outSize" value="32" />字</FormRow>
            <FormRow inner tall id="outRpi" label="RPI(通信周期)"><NumInput id="outRpi" value="5.0" /><T>ms   (2.0 - 10000.0ms)</T></FormRow>
            <label className="flex h-5 items-center gap-0.5 pl-[99px]">
              <span className="relative h-[11px] w-[11px]">
                <input type="checkbox" defaultChecked className="block h-[11px] w-[11px] appearance-none border border-[#333] bg-white" />
                <svg viewBox="0 0 11 11" className="pointer-events-none absolute inset-0"><path d="M2.500 5.500l2 2.500 4.500-5" fill="none" stroke="#222" /></svg>
              </span>
              <span><T>与IN保持一致</T></span>
            </label>
          </div>
        </fieldset>
        <div className="mt-1.5 flex justify-end gap-1.5">
          <Btn className={"w-[61px] " + b}>OK</Btn>
          <Btn className={"w-[61px] " + b}>取消</Btn>
        </div>
      </div>
    </section>
  );
}

function ParamDialog() {
  const cell = "overflow-hidden whitespace-nowrap border-b border-r border-[#a9a9a9] p-0 pl-0.5";
  const rows: [string, string, string, string][] = [
    ["0004", "Behaviour of outpu...", "0 :  All o...", "R/W"],
    ["0005", "Assembly Input Size", "64", "R/W"],
    ["0006", "Assembly Output Size", "64", "R/W"],
    ["0007", "Input_CP", "100", "R"],
    ["0008", "Output_CP", "101", "R"],
  ];
  const b = "border border-[#b5b5b5]";
  return (
    <section className={"absolute left-[809px] top-[224px] w-[288px] border border-[#8a8a8a] bg-[#f0f0f0] text-[#222] shadow-[0_1px_9px_rgba(0,0,0,0.45)] " + serif}>
      <header className="flex h-[26px] items-center bg-white pl-1.5">
        <h2 className="w-[255px]">参数设定</h2>
        <button aria-label="close"><Cross thin /></button>
      </header>
      <div className="flex h-[28px] items-center pl-1">
        <label htmlFor="target" className="w-[121px]"><T>参数(P)</T></label>
        <span className="relative block w-[150px]">
          <select id="target" disabled className="block h-4 w-full appearance-none bg-[#c8c8c8] pl-1 text-[11px] text-[#888] opacity-100"><option>EI2</option></select>
        </span>
      </div>
      <div className="ml-1 h-[162px] border-l border-t border-[#777] bg-[#ababab]">
        <table className="w-[282px] table-fixed border-collapse text-[11px] leading-3">
          <colgroup><col className="w-[40px]" /><col className="w-[111px]" /><col className="w-[84px]" /><col /></colgroup>
          <thead>
            <tr className="h-[13px] bg-[#f5f5f5] text-[10px]">
              <th className={cell + " text-[11px] font-normal"}>No.</th>
              <th className={cell + " font-normal"}>参数</th>
              <th className={cell + " font-normal"}>设定值</th>
              <th className={cell + " pl-1.5 text-left font-normal"}>属性</th>
            </tr>
          </thead>
          <tbody>
            {rows.map(([no, name, value, attr], i) => (
              <tr key={no} className="h-[13px] bg-[#c8c8c8]">
                <td className={cell + " pr-0.5 text-right"}>{no}</td>
                <td className={cell}>{name}</td>
                <td className={cell + (i < 3 ? " bg-white" : "")}>
                  {i === 0 ? (
                    <span className="relative -ml-0.5 block">
                      <select aria-label={name} defaultValue={value} className="block h-3 w-[71px] appearance-none border border-dotted border-[#444] pl-0.5 text-[11px] leading-[10px]"><option>{value}</option></select>
                      <span className="absolute right-0 top-0 h-3 w-3 bg-[#dcdcdc]" />
                      <span className="absolute inset-y-0 right-0 w-3.5"><Chevron /></span>
                    </span>
                  ) : value}
                </td>
                <td className={cell}>{attr}</td>
              </tr>
            ))}
          </tbody>
        </table>
      </div>
      <dl className="ml-1 mt-1.5 grid h-[100px] grid-cols-[72px_1fr] content-start border-l-2 border-t-2 border-[#888] bg-white pl-0.5 pt-px leading-[13px]">
        <dt>说明</dt>
        <dd className="mb-[2px] whitespace-pre text-[11px] leading-[10px]">{"All outputs off:0   Enable substitute\nvalue:1   Hold last value:2,  Only\nvalid in general PLC mode"}</dd>
        <dt>默认值</dt><dd className="text-[11px]">0</dd>
        <dt>范围</dt><dd className="text-[11px]">0 - 2</dd>
        <dt>当前的设定值</dt><dd className="text-[11px]">0</dd>
        <dt>备注</dt><dd />
      </dl>
      <div className="flex h-[28px] items-center pl-[5px]">
        <Btn className={"w-[87px] " + b}>恢复为默认值(D)</Btn>
        <Btn className="ml-[51px] w-[62px] border-2 border-[#0078d7]">OK</Btn>
        <Btn className={"ml-2 w-[61px] " + b}>取消</Btn>
      </div>
    </section>
  );
}

export default function App() {
  return (
    <div className="relative flex h-screen min-h-[676px] w-full flex-col overflow-hidden bg-[#f0f0f0] font-[family-name:'Noto_Sans','Noto_Sans_CJK_SC',sans-serif] text-[10px] leading-3 text-[#1f1f1f]">
      <header className="flex h-5 shrink-0 items-center bg-white text-[#8f8f8f]">
        <svg viewBox="0 0 16 16" className="mr-1 h-3 w-2" preserveAspectRatio="xMaxYMid slice" aria-hidden="true">{icons.app}</svg>
        <h1>KV STUDIO - [编辑器: KV-7500] - [20220624-多功能块测试程序 *]</h1>
      </header>
      <nav className="flex h-5 shrink-0 items-center gap-[15px] pl-px">
        {["文件(F)", "编辑(E)", "视图(V)", "程序(M)", "ST/脚本(S)", "转换(A)", "监控器/模拟器(N)", "调试(D)", "工具(T)", "窗口(W)", "帮助(H)"].map((m) => (
          <button key={m} className="whitespace-nowrap">{m}</button>
        ))}
      </nav>
      <div className="flex h-[22px] shrink-0 items-center">
        <div className="flex h-5 items-center rounded-r bg-[#f9f9f9] pl-1">
          <IconRow names={["new", "open", "save", "pageRung", "folderOff", "folderRung", "pageOff", "print", "preview", "help"]} className="w-[193px]" />
          <Grip />
          <Icon name="plcTool" />
          <Combo value="USB" className="ml-1 w-[129px]" />
          <Grip />
          <IconRow names={["send", "plcTalk", "plcIn", "plcOut", "find", "monCheck", "cutOff", "monGrid", "loop", "dev", "devPic"]} className="w-[213px]" />
          <Grip />
          <div className="flex w-[193px]">
            {fkeys.map(([k, d]) => (
              <button key={k} className="flex flex-1 flex-col items-center font-[family-name:'Liberation_Mono',monospace] text-[8px] leading-[8px]">
                {k}
                <svg viewBox="0 0 16 8" className="h-[7px] w-3.5"><path d={d} fill="none" stroke="#444" /></svg>
              </button>
            ))}
          </div>
        </div>
      </div>
      <div className="flex h-[22px] shrink-0 items-center">
        <div className="flex h-5 items-center rounded-r bg-[#f9f9f9] pl-1">
          <IconRow
            names={["pen", "list", "listOff", "listPen", "winGo", "winRung", "plcMon", "handOff", "monClock", "listClock", "monWarn", "rec", "rec", "play", "stop", "pause", "rew", "up", "prev", "next", "down", "ff", "gt", "dropC", "hand", "netOff", "stopwatch", "run"]}
            className="w-[540px]"
          />
          <Grip />
          <Combo value="编辑器" className="w-[136px]" />
          <Grip />
          <span className="ml-1 mr-1">注释</span>
          <Combo value="注释 1" className="w-[127px]" />
        </div>
      </div>
      <div className="flex min-h-0 flex-1">
        <ProjectPanel />
        <Editor />
      </div>

      <EthernetWindow />
      <ConnectionDialog />
      <ParamDialog />

      <div className="pointer-events-none absolute left-[810px] top-[229px] h-[139px] w-[269px] border-2 border-[#e5301f]" />
      <span className="absolute left-[426px] top-[304px] text-[18px] leading-[18px] text-[#e5301f]">①</span>
      <span className="absolute left-[646px] top-[375px] text-[18px] leading-[18px] text-[#e5301f]">②</span>
      <span className="absolute left-[932px] top-[390px] text-[18px] leading-[18px] text-[#e5301f]">③</span>
    </div>
  );
}
